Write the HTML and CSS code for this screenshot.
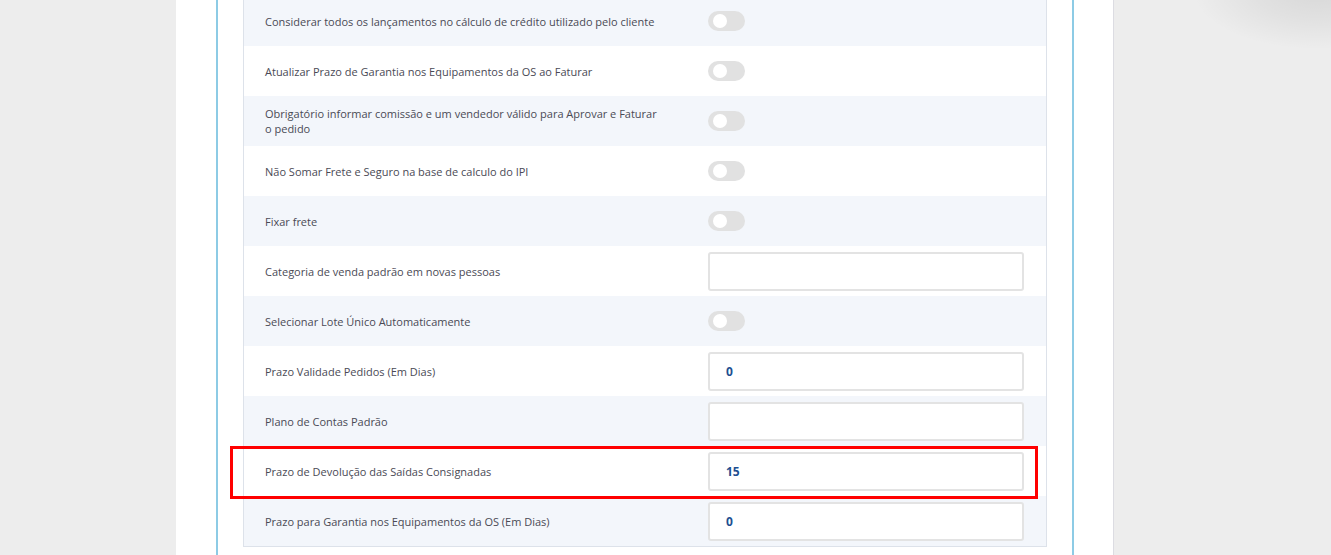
FILE: index.html
```html
<!DOCTYPE html>
<html lang="pt-BR">
<head>
<meta charset="utf-8">
<title>Configurações</title>
<link rel="stylesheet" href="styles.css">
</head>
<body>
<div class="corner-shadow"></div>
<div class="panel">
  <div class="frame">
    <div class="table">
      <div class="row alt">
        <div class="label">Considerar todos os lançamentos no cálculo de crédito utilizado pelo cliente</div>
        <div class="ctrl"><span class="toggle"></span></div>
      </div>
      <div class="row">
        <div class="label">Atualizar Prazo de Garantia nos Equipamentos da OS ao Faturar</div>
        <div class="ctrl"><span class="toggle"></span></div>
      </div>
      <div class="row alt">
        <div class="label">Obrigatório informar comissão e um vendedor válido para Aprovar e Faturar o pedido</div>
        <div class="ctrl"><span class="toggle"></span></div>
      </div>
      <div class="row">
        <div class="label">Não Somar Frete e Seguro na base de calculo do IPI</div>
        <div class="ctrl"><span class="toggle"></span></div>
      </div>
      <div class="row alt">
        <div class="label">Fixar frete</div>
        <div class="ctrl"><span class="toggle"></span></div>
      </div>
      <div class="row">
        <div class="label">Categoria de venda padrão em novas pessoas</div>
        <div class="ctrl"><div class="input"></div></div>
      </div>
      <div class="row alt">
        <div class="label">Selecionar Lote Único Automaticamente</div>
        <div class="ctrl"><span class="toggle"></span></div>
      </div>
      <div class="row">
        <div class="label">Prazo Validade Pedidos (Em Dias)</div>
        <div class="ctrl"><div class="input">0</div></div>
      </div>
      <div class="row alt">
        <div class="label">Plano de Contas Padrão</div>
        <div class="ctrl"><div class="input"></div></div>
      </div>
      <div class="row marked">
        <div class="label">Prazo de Devolução das Saídas Consignadas</div>
        <div class="ctrl"><div class="input">15</div></div>
        <div class="highlight"></div>
      </div>
      <div class="row alt">
        <div class="label">Prazo para Garantia nos Equipamentos da OS (Em Dias)</div>
        <div class="ctrl"><div class="input">0</div></div>
      </div>
    </div>
  </div>
</div>
</body>
</html>
```
FILE: styles.css
```css
html, body {
  margin: 0;
  padding: 0;
  height: 100%;
  overflow: hidden;
}
body {
  background: #ededed;
  font-family: "Open Sans", "Liberation Sans", sans-serif;
  font-size: 11px;
  color: #4a4a55;
  position: relative;
}
.corner-shadow {
  position: absolute;
  top: -50px;
  right: -40px;
  width: 180px;
  height: 100px;
  background: radial-gradient(ellipse at 70% 40%, rgba(0, 0, 0, 0.09) 0%, rgba(0, 0, 0, 0.05) 35%, rgba(0, 0, 0, 0) 70%);
}
.panel {
  box-sizing: border-box;
  margin-left: 176px;
  width: 938px;
  height: 100%;
  background: #ffffff;
  border-right: 1px solid #dcdce2;
  padding-left: 40px;
}
.frame {
  display: flow-root;
  box-sizing: border-box;
  width: 858px;
  height: 100%;
  border-left: 2px solid #8dcbe5;
  border-right: 2px solid #8dcbe5;
  padding: 0 25px;
}
.table {
  box-sizing: border-box;
  margin-top: -4px;
  border: 1px solid #dde2ea;
  border-top: none;
  width: 804px;
}
.row {
  position: relative;
  display: grid;
  grid-template-columns: 443px 316px;
  align-items: center;
  height: 50px;
  padding-left: 21px;
  background: #ffffff;
}
.row.alt {
  background: #f3f6fb;
}
.label {
  max-width: 400px;
  line-height: 15px;
}
.ctrl {
  display: flex;
  align-items: center;
}
.toggle {
  position: relative;
  display: block;
  width: 37px;
  height: 20px;
  border-radius: 10px;
  background: #e1e1e1;
}
.toggle::after {
  content: "";
  position: absolute;
  left: 5px;
  top: 3px;
  width: 14px;
  height: 14px;
  border-radius: 50%;
  background: #ffffff;
}
.input {
  box-sizing: border-box;
  width: 317px;
  height: 39px;
  border: 2px solid #e3e3e3;
  border-radius: 3px;
  background: #fff;
  padding-left: 16px;
  display: flex;
  align-items: center;
  font-size: 12px;
  font-weight: 700;
  color: #1d4f91;
}
.highlight {
  position: absolute;
  z-index: 2;
  left: -14px;
  top: 0;
  width: 808px;
  height: 53px;
  border: 3px solid #ff0000;
  box-sizing: border-box;
  pointer-events: none;
}
```
